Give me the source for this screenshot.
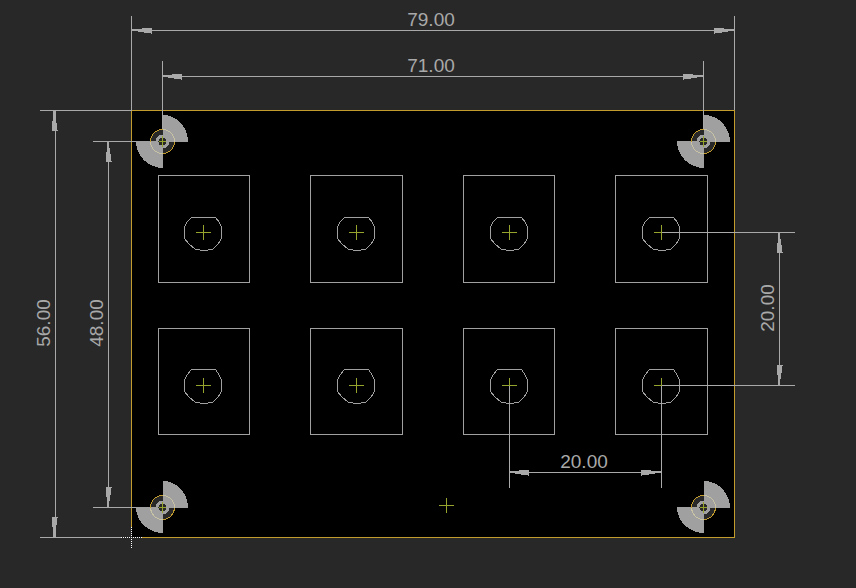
const GRAY = "#a0a0a0";
const LIGHT = "#a9a9a9";
const PANEL = "#282828";
const EDGE = "#c29c2c";
const OLIVE = "#96a32d";

const columns = [
  { x: 203, left: 158, width: 91 },
  { x: 356, left: 310, width: 92 },
  { x: 509, left: 463, width: 91 },
  { x: 661, left: 615, width: 92 },
];

const rows = [
  { y: 232, top: 175, height: 107, flat: 217 },
  { y: 385, top: 328, height: 106, flat: 369 },
];

const switches = rows.flatMap((row) => columns.map((column) => ({ ...row, ...column })));

const holes = [
  { x: 162, y: 141, right: 26, bottom: 27 },
  { x: 703, y: 141, right: 27, bottom: 27 },
  { x: 162, y: 507, right: 26, bottom: 26 },
  { x: 703, y: 507, right: 27, bottom: 26 },
];

const directions = {
  left: "1 0 0 1",
  right: "-1 0 0 1",
  up: "0 1 1 0",
  down: "0 -1 1 0",
};

function Line({ x1, y1, x2, y2, color = LIGHT }) {
  return <path d={`M${x1 + 0.5} ${y1 + 0.5}L${x2 + 0.5} ${y2 + 0.5}`} stroke={color} strokeLinecap="square" />;
}

function Arrow({ x, y, point }) {
  return (
    <path
      transform={`matrix(${directions[point]} ${x} ${y})`}
      d="M0 -1H10V-2H20V4H19V3H12V2H6V1H0Z"
      fill={LIGHT}
    />
  );
}

function Label({ x, y, vertical, children }) {
  return (
    <text
      transform={vertical ? `translate(${x} ${y}) rotate(-90)` : `translate(${x} ${y})`}
      textAnchor="middle"
      fill={LIGHT}
      className="font-['Liberation_Sans',Arial,sans-serif] text-[19px]"
    >
      {children}
    </text>
  );
}

function Cross({ x, y }) {
  return (
    <g>
      <Line x1={x - 7} y1={y} x2={x + 7} y2={y} color={OLIVE} />
      <Line x1={x} y1={y - 7} x2={x} y2={y + 7} color={OLIVE} />
    </g>
  );
}

function Switch({ x, y, left, top, width, height, flat }) {
  return (
    <g fill="none" stroke={GRAY}>
      <rect x={left + 0.5} y={top + 0.5} width={width} height={height} />
      <path d={`M${x - 11.5} ${flat + 0.5}H${x + 12.5}L${x + 16.5} ${y - 9.5}L${x + 18.5} ${y - 4.5}V${y + 6.5}L${x + 15.5} ${y + 11.5}L${x + 9.5} ${y + 17.5}L${x + 0.5} ${y + 18.5}L${x - 7.5} ${y + 17.5}L${x - 14.5} ${y + 11.5}L${x - 18.5} ${y + 6.5}V${y - 4.5}L${x - 16.5} ${y - 9.5}Z`} />
    </g>
  );
}

function Hole({ x, y, right, bottom }) {
  return (
    <g transform={`translate(${x} ${y})`}>
      <circle r="12" cx=".5" cy=".5" fill={PANEL} />
      <path d={`M1 1V-26A${right - 1} 27 0 0 1 ${right} 1Z`} fill={GRAY} />
      <path d={`M1 0V${bottom}A27 ${bottom} 0 0 1 -26 0Z`} fill={GRAY} />
      <circle r="7" cx=".5" cy=".5" fill={GRAY} />
      <circle r="4" cx=".5" cy=".5" fill={PANEL} />
      <circle r="12" cx=".5" cy=".5" fill="none" stroke={EDGE} />
      <path d="M.5 -11.5A12 12 0 0 1 12.5 .5M.5 12.5A12 12 0 0 1 -11.5 .5" fill="none" stroke="#c9c3a5" />
      <path d="M-3 .5H4M.5 -5V6" stroke={OLIVE} />
    </g>
  );
}

export default function App() {
  return (
    <main className="min-h-screen bg-[#282828]">
      <svg viewBox="0 0 856 588" className="block h-auto w-full" shapeRendering="crispEdges" role="img" aria-label="Board dimensions">
        <rect x="131.5" y="110.5" width="603" height="427" fill="#000" stroke={EDGE} />
        {switches.map((item) => <Switch key={`${item.x}-${item.y}`} {...item} />)}
        {switches.map(({ x, y }) => <Cross key={`${x}-${y}`} x={x} y={y} />)}
        <Cross x={446} y={505} />

        <Line x1={131} y1={16} x2={131} y2={109} />
        <Line x1={734} y1={16} x2={734} y2={109} />
        <Line x1={131} y1={30} x2={734} y2={30} />
        <Arrow x={132} y={30} point="left" />
        <Arrow x={734} y={30} point="right" />
        <Label x={431} y={26}>79.00</Label>

        <Line x1={162} y1={61} x2={162} y2={141} />
        <Line x1={703} y1={61} x2={703} y2={141} />
        <Line x1={162} y1={76} x2={703} y2={76} />
        <Arrow x={162} y={76} point="left" />
        <Arrow x={703} y={76} point="right" />
        <Label x={431} y={72}>71.00</Label>

        <Line x1={40} y1={110} x2={131} y2={110} />
        <Line x1={40} y1={537} x2={121} y2={537} />
        <Line x1={55} y1={110} x2={55} y2={537} />
        <Arrow x={54} y={111} point="up" />
        <Arrow x={54} y={537} point="down" />
        <Label x={50} y={323} vertical>56.00</Label>

        <Line x1={93} y1={141} x2={162} y2={141} />
        <Line x1={93} y1={507} x2={162} y2={507} />
        <Line x1={108} y1={141} x2={108} y2={507} />
        <Arrow x={108} y={142} point="up" />
        <Arrow x={108} y={507} point="down" />
        <Label x={103} y={323} vertical>48.00</Label>

        <Line x1={662} y1={232} x2={794} y2={232} />
        <Line x1={662} y1={385} x2={794} y2={385} />
        <Line x1={779} y1={232} x2={779} y2={385} />
        <Arrow x={779} y={233} point="up" />
        <Arrow x={779} y={385} point="down" />
        <Label x={774} y={308} vertical>20.00</Label>

        <Line x1={509} y1={386} x2={509} y2={487} />
        <Line x1={661} y1={386} x2={661} y2={487} />
        <Line x1={509} y1={472} x2={661} y2={472} />
        <Arrow x={509} y={472} point="left" />
        <Arrow x={661} y={472} point="right" />
        <Label x={584} y={468}>20.00</Label>

        {holes.map((hole) => <Hole key={`${hole.x}-${hole.y}`} {...hole} />)}

        <path d="M121 537.5H142M131.5 527V548" stroke={PANEL} />
        <path d="M121 537.5H142M131.5 527V548" stroke="#fff" strokeDasharray="1 1" />
      </svg>
    </main>
  );
}
